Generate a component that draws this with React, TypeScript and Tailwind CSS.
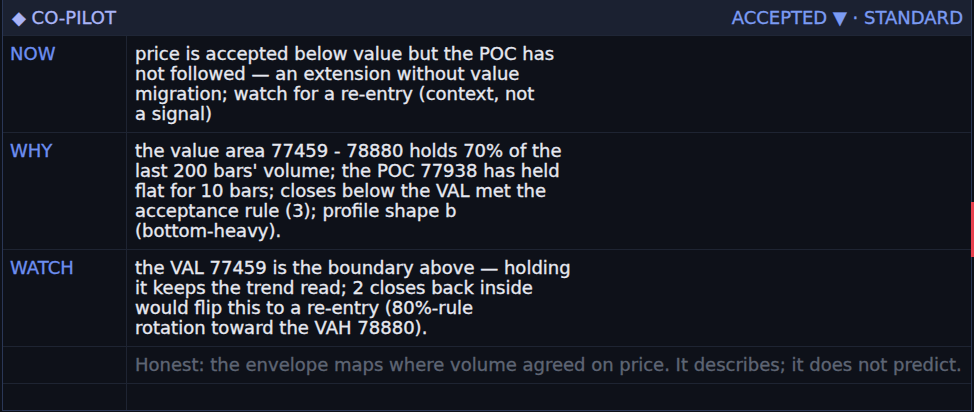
import React from "react";

type Row = { label: string; lines: string[] };

const rows: Row[] = [
  {
    label: "NOW",
    lines: [
      "price is accepted below value but the POC has",
      "not followed — an extension without value",
      "migration; watch for a re-entry (context, not",
      "a signal)",
    ],
  },
  {
    label: "WHY",
    lines: [
      "the value area 77459 - 78880 holds 70% of the",
      "last 200 bars' volume; the POC 77938 has held",
      "flat for 10 bars; closes below the VAL met the",
      "acceptance rule (3); profile shape b",
      "(bottom-heavy).",
    ],
  },
  {
    label: "WATCH",
    lines: [
      "the VAL 77459 is the boundary above — holding",
      "it keeps the trend read; 2 closes back inside",
      "would flip this to a re-entry (80%-rule",
      "rotation toward the VAH 78880).",
    ],
  },
];

export default function App() {
  return (
    <div className="relative h-[412px] w-[974px] overflow-hidden bg-[#0e1119] font-['DejaVu_Sans',sans-serif] text-[18px] leading-[20px] [-webkit-text-stroke:0.35px_currentColor]">
      <div className="ml-[2px] flex h-[411px] w-[970px] flex-col border-x border-b border-[#2a3756] bg-[#0e1119]">
        <div className="flex h-[36px] shrink-0 items-center justify-between border-b border-[#1f2636] bg-[#1b2131] pl-[9px] pr-[8px]">
          <span className="text-[#a9b4f7]">◆ CO-PILOT</span>
          <span className="text-[#7b9bf3]">ACCEPTED ▼ · STANDARD</span>
        </div>
        <div className="grid flex-1 grid-cols-[124px_1fr] grid-rows-[auto_auto_auto_auto_1fr]">
          {rows.map((r) => (
            <React.Fragment key={r.label}>
              <div className="border-b border-r border-[#1e2432] px-[7px] py-2 text-[#6d8ef0]">{r.label}</div>
              <div className="border-b border-[#1e2432] px-2 py-2 text-[#e6e8f0]">
                {r.lines.map((l) => (
                  <span key={l} className="block whitespace-nowrap">
                    {l}{" "}
                  </span>
                ))}
              </div>
            </React.Fragment>
          ))}
          <div className="border-b border-r border-[#1e2432] py-2" />
          <div className="border-b border-[#1e2432] px-2 py-2 text-[#5e6574]">
            Honest: the envelope maps where volume agreed on price. It describes; it does not predict.
          </div>
          <div className="border-r border-[#1e2432]" />
          <div />
        </div>
      </div>
      <div className="absolute right-0 top-[202px] h-[55px] w-[3px] bg-[#e8414f]" />
    </div>
  );
}
